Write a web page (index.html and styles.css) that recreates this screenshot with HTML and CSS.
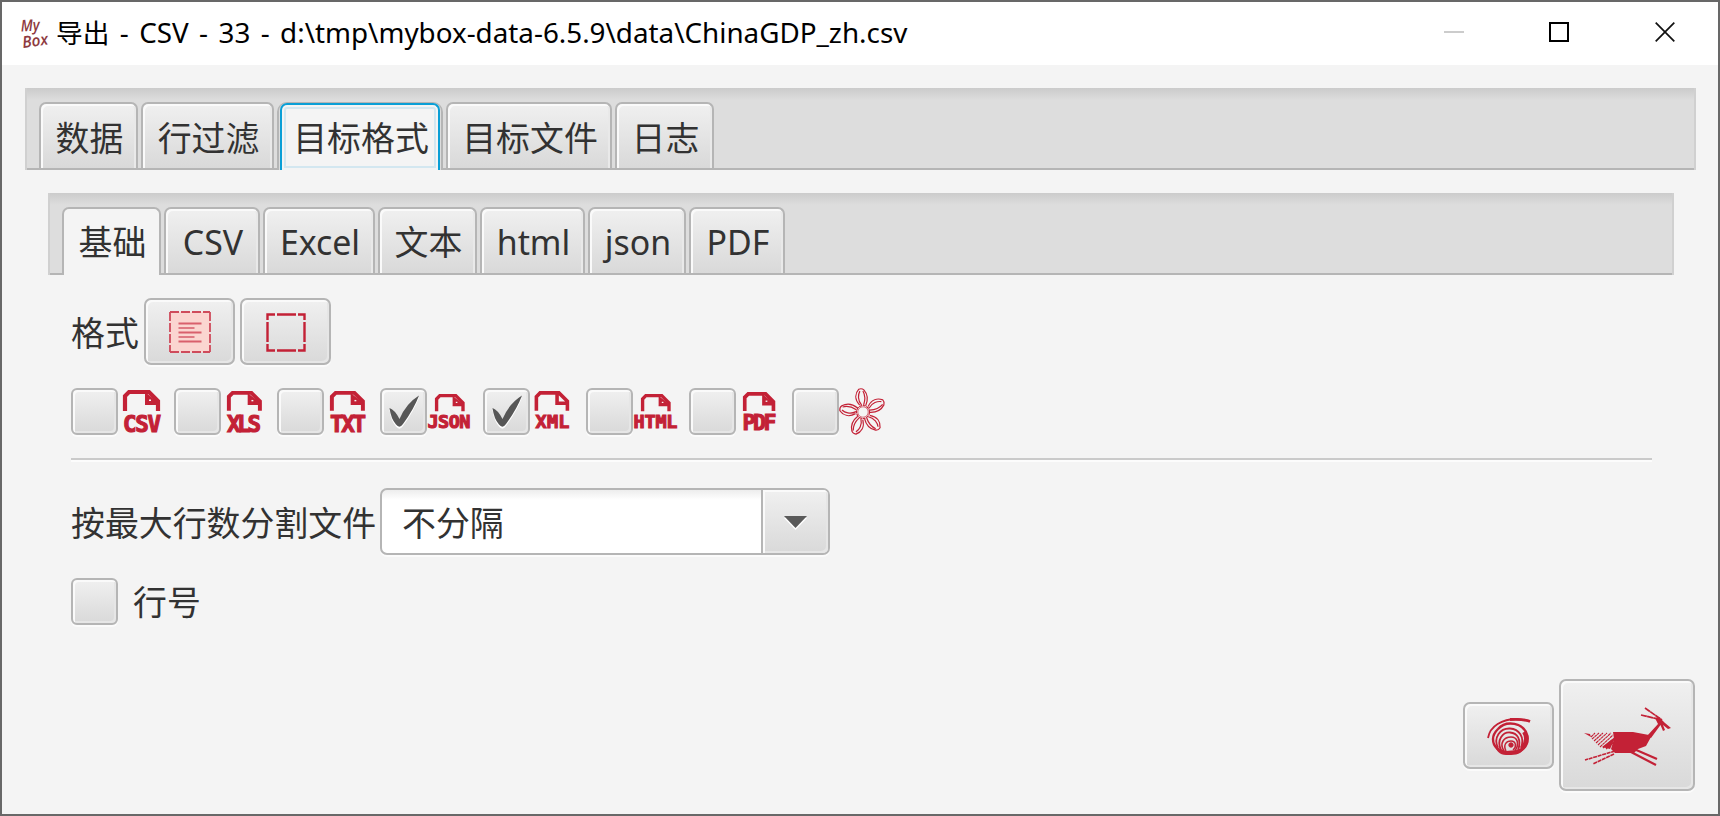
FILE: index.html
```html
<!DOCTYPE html>
<html lang="zh-CN">
<head>
<meta charset="utf-8">
<title>导出 - CSV - 33</title>
<link rel="stylesheet" href="styles.css">
</head>
<body>
<svg class="defs" width="0" height="0">
  <defs>
    <g id="file">
      <path d="M2 21V6L6 2H26L35 11V21" fill="none" stroke="#c32136" stroke-width="4.200"/>
      <path d="M22 2L36 13V15H22Z" fill="#c32136"/>
      <path d="M26 9.500H28V11H26Z" fill="#f4f4f4"/>
    </g>
    <g id="file-open">
      <path d="M2 21V6L6 2H26L35 11V21M24 2V13H35" fill="none" stroke="#c32136" stroke-width="3.800"/>
    </g>
    <path id="tick" d="M0.500 13Q6 15 10.500 24Q17 8.500 30 0.500Q25 14 14 29Q10.500 34 7 29.500Q2 24 0.500 13Z"/>
    <path id="petal" d="M-3 -7C-8 -13 -7 -19 -3 -23Q0 -24 2 -22C6 -17 6 -12 3 -6M-1 -7C-5 -12 -4 -18 -2 -21M1 -7C3 -12 3 -17 1 -21"/>
  </defs>
</svg>
<div class="window">
  <header class="titlebar">
    <svg class="logo" width="30" height="32" viewBox="0 0 30 32">
      <text x="1" y="13.500" textLength="19" lengthAdjust="spacingAndGlyphs" transform="rotate(-3 1 14)">My</text>
      <text x="3" y="30" textLength="26" lengthAdjust="spacingAndGlyphs" transform="rotate(-8 3 30)">Box</text>
    </svg>
    <h1 class="title"><span class="action">导出</span> - CSV - 33 - d:\tmp\mybox-data-6.5.9\data\ChinaGDP_zh.csv</h1>
    <div class="controls">
      <svg width="20" height="20"><path d="M0 10H20" stroke="#ccc" stroke-width="2"/></svg>
      <svg width="20" height="20"><path d="M1 1H19V19H1Z" fill="none" stroke="#000" stroke-width="2"/></svg>
      <svg width="20" height="20"><path d="M.7.7L19.3 19.3M19.3.7L.7 19.3" stroke="#111" stroke-width="1.7"/></svg>
    </div>
  </header>

  <main class="body">
    <nav class="tabs main">
      <div class="tab w99">数据</div>
      <div class="tab w133">行过滤</div>
      <div class="tab focused">目标格式</div>
      <div class="tab w166">目标文件</div>
      <div class="tab w99">日志</div>
    </nav>
    <section class="panel">
      <nav class="tabs">
        <div class="tab w99 active">基础</div>
        <div class="tab w96">CSV</div>
        <div class="tab w112">Excel</div>
        <div class="tab w99">文本</div>
        <div class="tab w105">html</div>
        <div class="tab w98">json</div>
        <div class="tab w96">PDF</div>
      </nav>
      <div class="content">
        <div class="row format">
          <span class="label">格式</span>
          <button class="button">
            <svg class="glyph" width="42" height="42">
              <path d="M1 1H41V41H1Z" fill="#fbd5d0"/>
              <path d="M1 1H41M1 41H41M1 1V41M41 1V41" fill="none" stroke="#cf4b5b" stroke-width="1.8" stroke-dasharray="9 2"/>
              <path d="M9.500 12.500H32.500M9.500 21.500H32.500M9.500 30.500H32.500" stroke="#d9606c" stroke-width="2"/>
              <path d="M9.500 17H25.500M9.500 26H25.500" stroke="#c32136" stroke-width="1.200"/>
            </svg>
          </button>
          <button class="button">
            <svg class="glyph" width="42" height="42">
              <path d="M2.500 9V3.500H10M12 3.500H31M33 3.500H39.500V9M39.500 11V31M39.500 33V39.500H33M31 39.500H12M10 39.500H2.500V33M2.500 31V11" fill="none" stroke="#c32136" stroke-width="2.400"/>
            </svg>
          </button>
        </div>

        <div class="row formats">
          <div class="choice"><span class="check"></span>
            <svg width="50" height="47"><use href="#file" transform="translate(5 2)"/><text class="tag" x="5" y="44" textLength="38" lengthAdjust="spacing">CSV</text></svg></div>
          <div class="choice"><span class="check"></span>
            <svg width="50" height="47"><use href="#file" transform="translate(6 3) scale(.94)"/><text class="tag" x="6" y="43.500" textLength="34" lengthAdjust="spacing">XLS</text></svg></div>
          <div class="choice"><span class="check"></span>
            <svg width="50" height="47"><use href="#file" transform="translate(6 3) scale(.94)"/><text class="tag" x="6" y="43.500" textLength="36" lengthAdjust="spacing">TXT</text></svg></div>
          <div class="choice"><span class="check on"><svg width="31" height="34"><use href="#tick" y="2" fill="#fff"/><use href="#tick" fill="#575757"/></svg></span>
            <svg width="50" height="47"><use href="#file" transform="translate(8 6) scale(.8 .82)"/><text class="tag small" x="0.500" y="40" textLength="43" lengthAdjust="spacing">JSON</text></svg></div>
          <div class="choice"><span class="check on"><svg width="31" height="34"><use href="#tick" y="2" fill="#fff"/><use href="#tick" fill="#575757"/></svg></span>
            <svg width="50" height="47"><use href="#file-open" transform="translate(4.500 3) scale(.94)"/><text class="tag small" x="5.500" y="40" textLength="34" lengthAdjust="spacing">XML</text></svg></div>
          <div class="choice"><span class="check"></span>
            <svg width="50" height="47"><use href="#file" transform="translate(8 6) scale(.8 .82)"/><text class="tag small" x="0.500" y="40" textLength="44" lengthAdjust="spacing">HTML</text></svg></div>
          <div class="choice"><span class="check"></span>
            <svg width="50" height="47"><use href="#file" transform="translate(7 4) scale(.87 .9)"/><text class="tag mid" x="6.500" y="42" textLength="34" lengthAdjust="spacing">PDF</text></svg></div>
          <div class="choice"><span class="check"></span>
            <svg width="50" height="47" viewBox="0 0 50 47"><g transform="translate(24 24)" fill="none" stroke="#c32136" stroke-width="1.200"><circle r="6.500" stroke-dasharray="3 .7"/><circle r="5.200" stroke-width=".6"/><use href="#petal" transform="rotate(-3)"/><use href="#petal" transform="rotate(66)"/><use href="#petal" transform="rotate(140)"/><use href="#petal" transform="rotate(205)"/><use href="#petal" transform="rotate(281)"/></g></svg></div>
        </div>

        <hr class="separator">

        <div class="row split">
          <span class="label">按最大行数分割文件</span>
          <div class="combo">
            <span class="value">不分隔</span>
            <span class="arrow"><svg width="23" height="12"><path d="M0 2H23L11.500 14Z" fill="#fff"/><path d="M0 0H23L11.500 12Z" fill="#5a5a5a"/></svg></span>
          </div>
        </div>

        <div class="row line-number">
          <span class="check"></span>
          <span class="label">行号</span>
        </div>
      </div>
    </section>

    <footer class="actions">
      <button class="button">
        <svg class="spiral" width="48" height="44" viewBox="0 0 48 44" fill="none" stroke="#c32136">
          <path d="M2 24C4 12 16 5 31 5L44 7" stroke-width="1.800"/>
          <path d="M24 5.500C32 5 39 5.500 44 7.500" stroke-width="2.800"/>
          <path d="M12 15C20 6 38 8 41.500 22C43 32 36 39 25 39C12 39 7 32 7 25C7 21 9 18 12 15" stroke-width="2.400"/>
          <path d="M38 18Q43 26 36 34" stroke-width="4"/>
          <path d="M12 34C7 24 14 14 24 14.500C33 15 39 23 35 34" stroke-width="1.800"/>
          <path d="M15 36C10 26 17 18 24 18.500C31 19 36 25 32 36" stroke-width="1.800"/>
          <path d="M18 37C13 29 18 23 25 23C31 23 34 29 29 37" stroke-width="1.600"/>
          <path d="M20 37C17 31 20 27 25 27C30 27 31 33 27 36" stroke-width="1.500"/>
          <circle cx="25" cy="31" r="2.200" fill="#c32136"/>
          <path d="M8 29C11 42 18 41 25 41C34 41 40 36 41 28L37 33L31 36L20 37L12 34Z" fill="#c32136" stroke="none"/>
        </svg>
      </button>
      <button class="button go">
        <svg class="deer" width="88" height="60" viewBox="0 0 88 60">
          <g fill="#c32136">
            <path d="M29 26L49 26L65 29L67 31L62 40L54 43L50 47L31 47L27 43L30 33Z"/>
            <path d="M63 30L74 18L71 12L75 11L81 17L87 22L84 23L79 19L81 24L79 25L76.500 19L67 32Z"/>
            <path d="M27 34L32 30L26 43L18 41Z"/>
            <path d="M0 27L6 28L7 31Z"/>
          </g>
          <g fill="none" stroke="#c32136">
            <path d="M61 2L78 14M57 9L74 13" stroke-width="1.700" stroke-dasharray="6 .3"/>
            <path d="M50 43L73 53M47 46L72 59" stroke-width="2.200"/>
            <path d="M31 45L1 54M30 48L9 58" stroke-width="1.600" stroke-dasharray="4 .7"/>
            <path d="M7 31L11 27M8 33L15 27M10 35L19 27M12 37L23 27M14 39L27 27M16 41L29 29M19 42L28 34M22 43L29 37" stroke-width="1.100" stroke-dasharray="3 .4"/>
          </g>
        </svg>
      </button>
    </footer>
  </main>
</div>
</body>
</html>
```
FILE: styles.css
```css
* { box-sizing: border-box; }

body {
  margin: 0;
  font-family: "Noto Sans", "Noto Sans CJK SC", sans-serif;
  font-size: 33.9px;
  color: #323232;
}

.defs { position: absolute; }
svg { display: block; flex: none; overflow: visible; }

.window {
  width: 1720px;
  height: 816px;
  border: 2px solid #686868;
  background: #f4f4f4;
  display: flex;
  flex-direction: column;
  overflow: hidden;
}

.titlebar {
  height: 63px;
  background: #fff;
  display: flex;
  align-items: center;
  padding: 0 43px 0 18px;
}

.logo text {
  font: italic 600 16px "Open Sans", sans-serif;
  fill: #8e3a40;
}

.title {
  margin: -2px 0 0 6px;
  font-size: 27.8px;
  font-weight: 400;
  line-height: 40px;
  word-spacing: 3.2px;
  color: #000;
  white-space: nowrap;
}

.action { font-size: 26.7px; }

.controls {
  margin-left: auto;
  display: flex;
  gap: 86px;
  padding-bottom: 3px;
}

.controls svg:first-child { margin-right: -1px; }

.body {
  flex: 1;
  display: flex;
  flex-direction: column;
  padding: 23px 22px 23px 23px;
}

.tabs {
  height: 82px;
  flex: none;
  display: flex;
  gap: 3px;
  padding: 14px 14px 0 12px;
  border: solid #d0d0d0;
  border-width: 0 2px;
  background:
    linear-gradient(#b5b5b5, #b5b5b5) 0 100% / 100% 2px no-repeat,
    linear-gradient(#cbcbcb, #ddd 12px);
}

.tab {
  flex: none;
  height: 66px;
  border: 2px solid #b5b5b5;
  border-bottom: 0;
  border-radius: 7px 7px 0 0;
  background: linear-gradient(#f0f0f0, #d9d9d9);
  box-shadow: inset 2px 2px 0 #fafafa, inset -2px 0 0 #e9e9e9;
  padding-left: 2px;
  text-align: center;
  line-height: 67px;
  white-space: nowrap;
}

.main .tab { line-height: 69px; }

.tab.active {
  height: 68px;
  background: #f4f4f4;
  box-shadow: none;
}

.main .tab.focused {
  width: 160px;
  height: 67px;
  margin: 1px 3px 0;
  border-color: #0a9fd6;
  background: #f4f4f4;
  box-shadow: inset 0 0 0 2px #f4f4f4, inset 0 0 0 4px #d3e7f0, 0 1px 0 1px #dcdcdc, 0 2px 0 3px #b5b5b5;
  clip-path: inset(-2px -4px 0 -4px);
  line-height: 67px;
}

.w96 { width: 96px; }
.w98 { width: 98px; }
.w99 { width: 99px; }
.w105 { width: 105px; }
.w112 { width: 112px; }
.w133 { width: 133px; }
.w166 { width: 166px; }

.panel { padding: 23px 22px 0 23px; }

.content {
  padding: 23px 22px 0 23px;
  display: flex;
  flex-direction: column;
}

.row { display: flex; align-items: center; }
.label { line-height: 50px; padding-top: 2px; white-space: nowrap; }

.format { gap: 5px; height: 67px; }

.button {
  width: 91px;
  height: 67px;
  padding: 0;
  border: 2px solid #b5b5b5;
  border-radius: 7px;
  background: linear-gradient(#f0f0f0, #d9d9d9);
  box-shadow: inset 2px 2px 0 #fafafa, inset -2px -2px 0 #e6e6e6, 0 2px 0 #fbfbfb;
  display: flex;
  align-items: center;
  justify-content: center;
}

.glyph { margin-left: 1px; }
.spiral { margin: 2px 0 0 3px; }

.formats { margin-top: 23px; height: 47px; }
.choice { display: flex; width: 103px; }

.check {
  flex: none;
  width: 47px;
  height: 47px;
  border: 2px solid #b5b5b5;
  border-radius: 6px;
  background: linear-gradient(#f0f0f0, #d9d9d9);
  box-shadow: inset 2px 2px 0 #fafafa, inset -2px -2px 0 #e6e6e6, 0 2px 0 #fbfbfb;
}

.check.on { padding: 5px 0 0 7px; }

.tag {
  font: 700 22.5px "DejaVu Sans Mono", monospace;
  fill: #c32136;
  stroke: #c32136;
  stroke-width: 1.1px;
}

.tag.mid { font-size: 21.5px; }
.tag.small { font-size: 18.5px; }

.separator {
  width: 100%;
  height: 4px;
  margin: 23px 0 0;
  border: 0;
  border-top: 2px solid #cacaca;
  background: #fcfcfc;
}

.split { margin-top: 26px; height: 67px; gap: 4px; }

.combo {
  width: 450px;
  height: 67px;
  border: 2px solid #b5b5b5;
  border-radius: 7px;
  background: linear-gradient(#ededed, #fff 10px);
  box-shadow: 0 2px 0 #fbfbfb;
  display: flex;
  align-items: center;
}

.value { flex: 1; padding-left: 20px; }

.arrow {
  width: 67px;
  height: 63px;
  border-left: 2px solid #b5b5b5;
  border-radius: 0 5px 5px 0;
  background: linear-gradient(#f0f0f0, #d9d9d9);
  box-shadow: inset 2px 2px 0 #fafafa, inset -2px -2px 0 #e6e6e6;
  display: flex;
  align-items: center;
  justify-content: center;
}

.line-number { margin-top: 23px; height: 47px; gap: 15px; }
.line-number .label { padding-top: 0; }

.actions {
  margin-top: auto;
  padding-right: 1px;
  display: flex;
  justify-content: flex-end;
  align-items: center;
  gap: 5px;
}

.go { width: 136px; height: 112px; }
.deer { margin: 2px 0 0 2px; }
```
